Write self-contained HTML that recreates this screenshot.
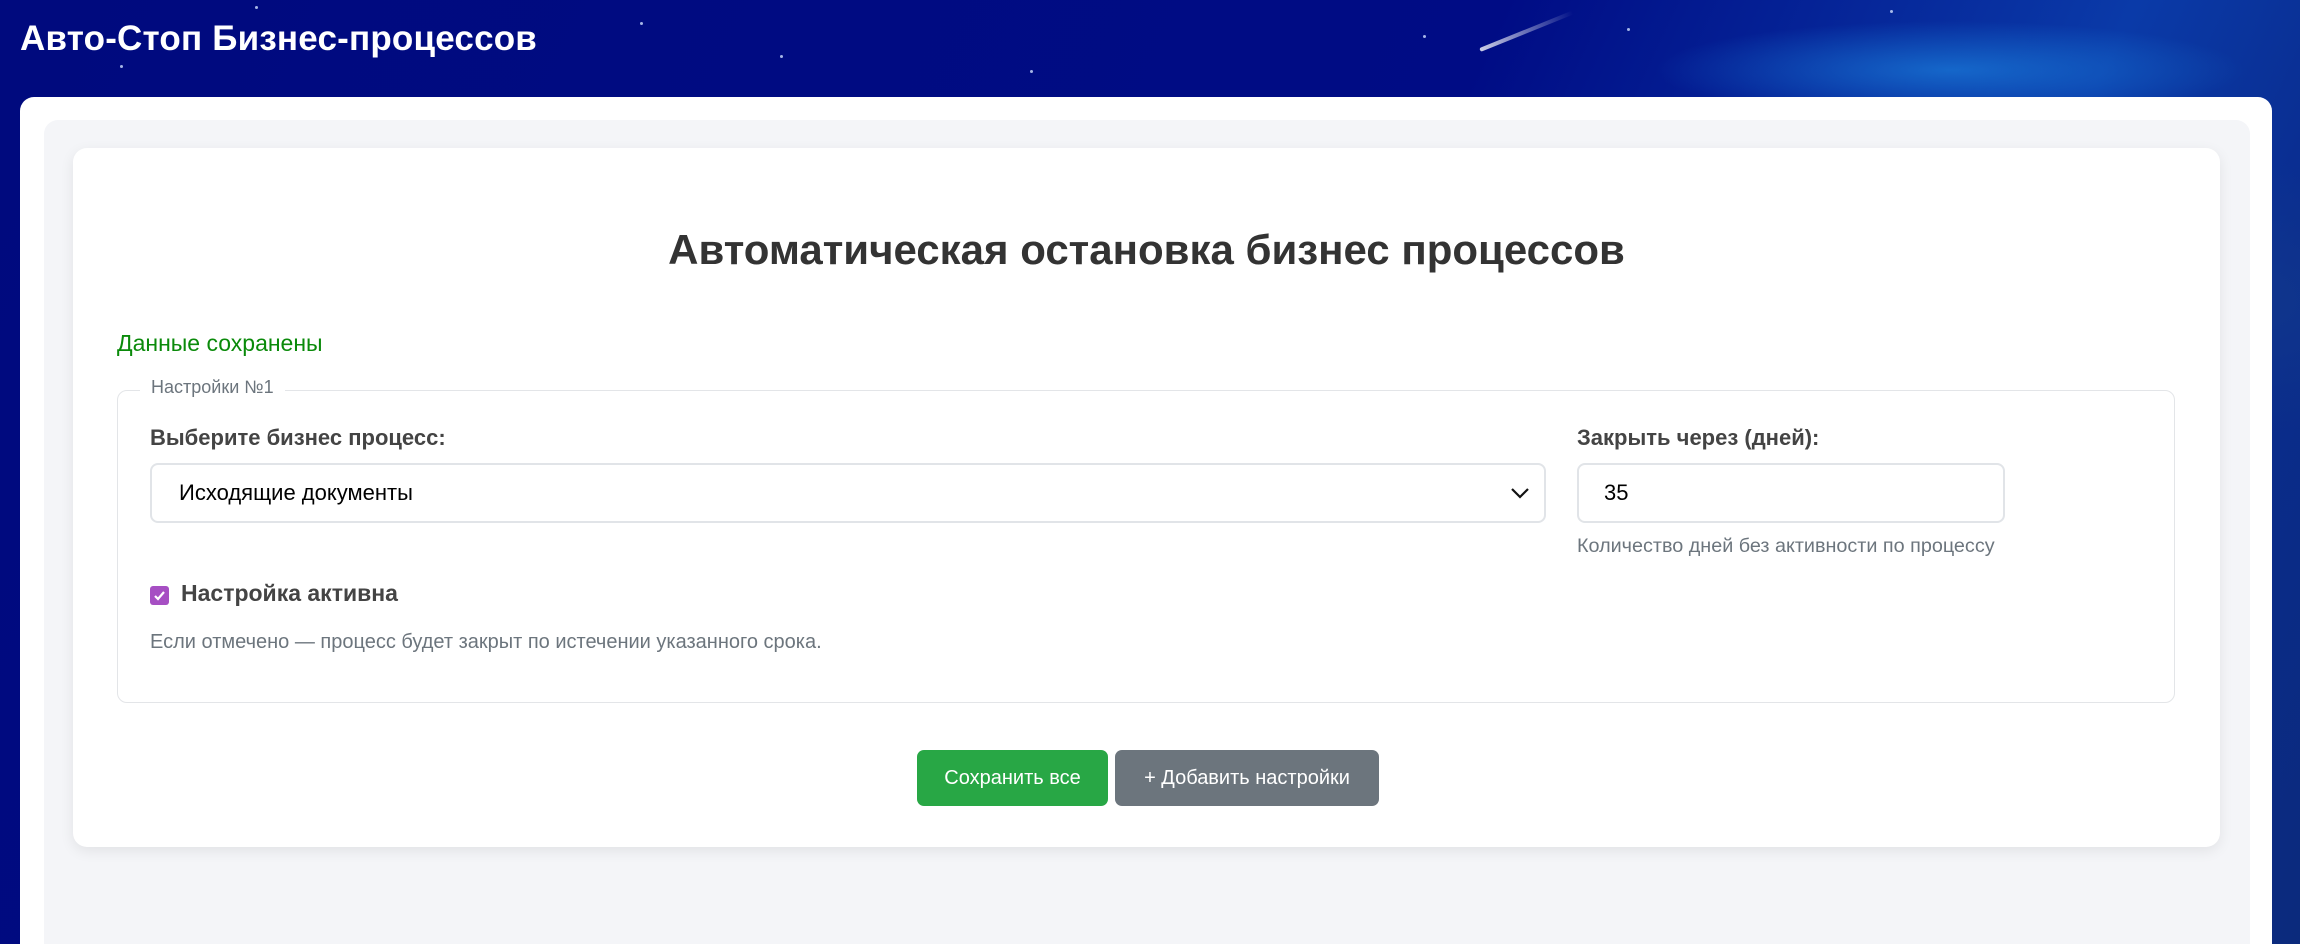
<!DOCTYPE html>
<html><head><meta charset="utf-8"><style>
*{box-sizing:border-box;margin:0;padding:0}
html,body{width:2300px;height:944px;overflow:hidden}
body{font-family:"Liberation Sans",sans-serif;position:relative;
background:
radial-gradient(ellipse 420px 70px at 1950px 70px, rgba(30,140,230,.6), transparent 70%),
radial-gradient(ellipse 300px 200px at 2250px 300px, rgba(20,60,140,.6), transparent 70%),
linear-gradient(115deg,#000a7e 0%,#000c85 55%,#0a3aa8 78%,#0a2c8e 88%,#0b2a7c 100%);}
.star{position:absolute;width:3px;height:3px;border-radius:50%;background:#cfe0ff;opacity:.8}
.title{position:absolute;left:20px;top:19px;color:#fff;font-size:35px;font-weight:700;letter-spacing:0.2px}
.wrap{position:absolute;left:20px;top:97px;width:2252px;height:847px;background:#fff;border-radius:14px 14px 0 0}
.panel{position:absolute;left:24px;top:23px;width:2206px;height:824px;background:#f4f5f8;border-radius:14px 14px 0 0}
.card{position:absolute;left:29px;top:28px;width:2147px;height:699px;background:#fff;border-radius:14px;box-shadow:0 4px 14px rgba(0,0,0,.08)}
h1{position:absolute;left:0;right:0;top:78px;text-align:center;font-size:42px;font-weight:700;color:#333}
.ok{position:absolute;left:44px;top:182px;color:#0a8a0a;font-size:23px}
.fs{position:absolute;left:44px;top:242px;width:2058px;height:313px;border:1.5px solid #e3e5e8;border-radius:10px}
.lg{position:absolute;left:22px;top:-14px;background:#fff;padding:0 11px;color:#6c757d;font-size:18px}
.lbl{position:absolute;font-size:22px;font-weight:600;color:#444}
.box{position:absolute;height:60px;border:2.5px solid #e1e4e8;border-radius:8px;background:#fff;font-size:22px;color:#000;padding-left:27px;line-height:55px}
.help{position:absolute;font-size:19.8px;color:#6c757d}
.btn{position:absolute;top:602px;height:56px;border-radius:7px;color:#fff;font-size:20px;line-height:56px;text-align:center}
</style></head><body>
<div class="star" style="left:255px;top:6px"></div>
<div class="star" style="left:640px;top:22px"></div>
<div class="star" style="left:120px;top:65px"></div>
<div class="star" style="left:1030px;top:70px"></div>
<div class="star" style="left:1423px;top:35px"></div>
<div class="star" style="left:1627px;top:28px"></div>
<div class="star" style="left:1890px;top:10px"></div>
<div class="star" style="left:780px;top:55px"></div>
<div style="position:absolute;left:1480px;top:48px;width:100px;height:4px;background:linear-gradient(90deg,#fff,rgba(80,120,255,0));transform:rotate(-22deg);transform-origin:left;border-radius:2px;opacity:.8"></div>
<div class="title">Авто-Стоп Бизнес-процессов</div>
<div class="wrap"><div class="panel"><div class="card">
<h1>Автоматическая остановка бизнес процессов</h1>
<div class="ok">Данные сохранены</div>
<div class="fs">
<div class="lg">Настройки №1</div>
<div class="lbl" style="left:32px;top:34px">Выберите бизнес процесс:</div>
<div class="box" style="left:32px;top:72px;width:1396px">Исходящие документы
<svg style="position:absolute;right:14px;top:22px" width="20" height="12" viewBox="0 0 20 12"><path d="M2 2l8 8 8-8" fill="none" stroke="#111" stroke-width="2.2"/></svg></div>
<div class="lbl" style="left:1459px;top:34px">Закрыть через (дней):</div>
<div class="box" style="left:1459px;top:72px;width:428px;padding-left:25px">35</div>
<div class="help" style="left:1459px;top:144px">Количество дней без активности по процессу</div>
<div style="position:absolute;left:32px;top:195px;width:19px;height:19px;border-radius:3px;background:#a64fc3"><svg width="19" height="19" viewBox="0 0 19 19"><path d="M5 10l3 3 6-7" fill="none" stroke="#fff" stroke-width="2.2"/></svg></div>
<div class="lbl" style="left:63px;top:189px;font-size:23px">Настройка активна</div>
<div class="help" style="left:32px;top:240px;font-size:20px">Если отмечено — процесс будет закрыт по истечении указанного срока.</div>
</div>
<div class="btn" style="left:844px;width:191px;background:#28a745">Сохранить все</div>
<div class="btn" style="left:1042px;width:264px;background:#6c757d">+ Добавить настройки</div>
</div></div></div>
</body></html>
